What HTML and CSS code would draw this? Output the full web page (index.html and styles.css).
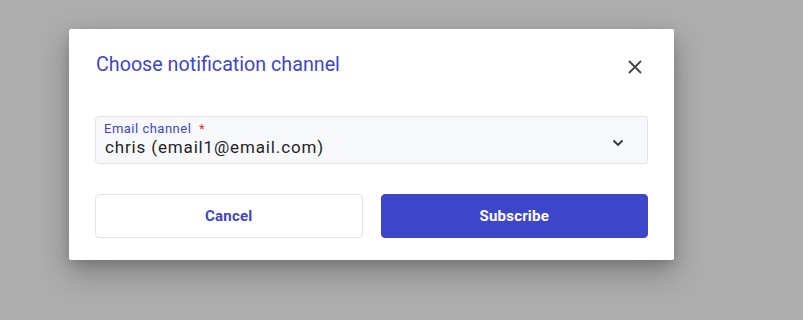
FILE: index.html
```html
<!DOCTYPE html>
<html>
<head>
<meta charset="utf-8">
<link rel="stylesheet" href="styles.css">
</head>
<body>
<div class="backdrop">
  <div class="dialog">
    <div class="dialog-header">
      <h2 class="dialog-title">Choose notification channel</h2>
      <button class="close-btn" aria-label="Close">
        <svg width="14" height="14" viewBox="0 0 14 14"><path d="M1 1 L13 13 M13 1 L1 13" stroke="#444" stroke-width="1.8" fill="none"/></svg>
      </button>
    </div>
    <div class="field">
      <div class="field-text">
        <div class="field-label">Email channel <span class="req">*</span></div>
        <div class="field-value">chris (email1@email.com)</div>
      </div>
      <svg class="chevron" width="12" height="8" viewBox="0 0 12 8"><path d="M1.5 1.5 L6 6 L10.5 1.5" stroke="#333" stroke-width="1.8" fill="none"/></svg>
    </div>
    <div class="actions">
      <button class="btn btn-secondary">Cancel</button>
      <button class="btn btn-primary">Subscribe</button>
    </div>
  </div>
</div>
</body>
</html>
```
FILE: styles.css
```css
html, body {
  margin: 0;
  padding: 0;
  height: 100%;
}
body {
  background: #adadad;
  font-family: Roboto, "Liberation Sans", sans-serif;
  overflow: hidden;
}
.backdrop {
  padding: 29px 0 0 69px;
}
.dialog {
  width: 605px;
  box-sizing: border-box;
  background: #fff;
  border-radius: 2px;
  padding: 22px 26px 22px 26px;
  box-shadow: 0 12px 30px rgba(0,0,0,0.28), 0 4px 10px rgba(0,0,0,0.12);
}
.dialog-header {
  display: flex;
  align-items: center;
  justify-content: space-between;
  height: 32px;
}
.dialog-title {
  margin: 0 0 0 1px;
  font-size: 19.7px;
  font-weight: 400;
  color: #3d46c8;
  line-height: 28px;
  align-self: flex-start;
}
.close-btn {
  border: none;
  background: none;
  padding: 0;
  margin-right: 6px;
  width: 14px;
  height: 14px;
  display: flex;
}
.field {
  margin-top: 33px;
  height: 48px;
  box-sizing: border-box;
  background: #f7f8fa;
  border: 1px solid #e3e5e8;
  border-radius: 4px;
  display: flex;
  align-items: center;
  justify-content: space-between;
  padding: 0 23px 0 8px;
}
.field-text {
  display: flex;
  flex-direction: column;
}
.field-label {
  font-size: 13px;
  line-height: 15px;
  letter-spacing: 0.5px;
  color: #3d46c8;
  margin-top: -2px;
}
.req {
  color: #e0342f;
  margin-left: 4px;
}
.field-value {
  font-size: 17px;
  line-height: 21px;
  color: #252525;
  letter-spacing: 0.85px;
  margin-left: 1px;
  margin-top: 1px;
}
.chevron {
  margin-top: 6px;
}
.actions {
  margin-top: 30px;
  display: flex;
  gap: 18px;
}
.btn {
  flex: 1;
  height: 44px;
  border-radius: 4px;
  font-family: Roboto, "Liberation Sans", sans-serif;
  font-size: 15px;
  font-weight: 700;
  letter-spacing: 0.2px;
  cursor: pointer;
}
.btn-secondary {
  background: #fff;
  border: 1px solid #e3e5e8;
  color: #3d46c8;
}
.btn-primary {
  background: #3d46cb;
  border: 1px solid #3d46cb;
  color: #fff;
}
```
